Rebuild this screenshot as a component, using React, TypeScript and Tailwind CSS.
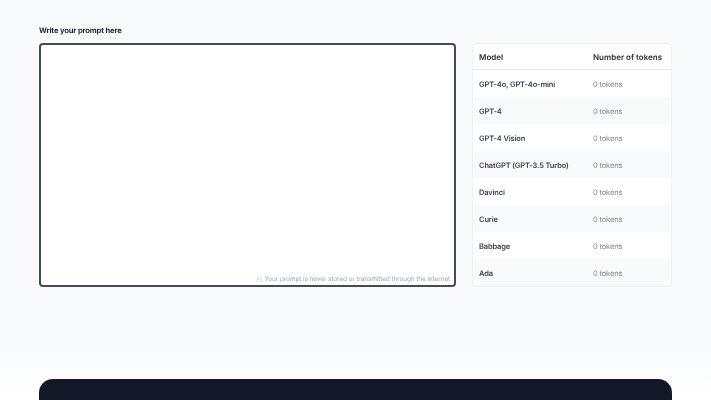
import { Lock } from 'lucide-react'

const models = [
  'GPT-4o, GPT-4o-mini',
  'GPT-4',
  'GPT-4 Vision',
  'ChatGPT (GPT-3.5 Turbo)',
  'Davinci',
  'Curie',
  'Babbage',
  'Ada',
]

export default function App() {
  return (
    <div className="h-[400px] overflow-hidden bg-[#f9fafb] font-['Inter',sans-serif] [text-rendering:geometricPrecision]">
      <div className="flex h-[345px] flex-col px-[39px] pt-[25px]">
        <div className="text-[7.6px] leading-[11px] font-bold tracking-[-0.02em] text-[#1f2937] will-change-transform">
          Write your prompt here
        </div>
        <div className="mt-[7px] flex gap-[16px]">
          <div className="relative h-[244px] w-[417px] rounded-[4px] border-2 border-[#434b58] bg-white">
            <textarea className="h-full w-full resize-none bg-transparent outline-none" />
            <div className="absolute right-[4px] bottom-[1px] flex items-center gap-[2px] text-[6.55px] leading-[10px] tracking-[-0.02em] text-[#a3a9b3] will-change-transform">
              <Lock size={6.5} strokeWidth={1} />
              <span>Your prompt is never stored or transmitted through the internet</span>
            </div>
          </div>
          <div className="h-[244px] w-[200px] overflow-hidden rounded-[4px] border border-[#f0f1f3] bg-white">
            <div className="flex h-[26px] items-center border-b border-[#e5e7eb] px-[6px] text-[8px] font-semibold text-[#1f2937] will-change-transform">
              <div className="w-[114px]">Model</div>
              <div>Number of tokens</div>
            </div>
            {models.map((name, i) => (
              <div
                key={name}
                className={`flex h-[27px] items-center px-[6px] pt-[1.5px] text-[7.5px] tracking-[-0.02em] will-change-transform ${i % 2 === 1 ? 'bg-[#f9fafb]' : 'bg-white'}`}
              >
                <div className="w-[114px] font-semibold text-[#3b4554]">{name}</div>
                <div className="text-[#7d8490]">0 tokens</div>
              </div>
            ))}
          </div>
        </div>
      </div>
      <div className="h-[55px] bg-gradient-to-b from-[#f9fafb] to-white px-[39px] pt-[34px]">
        <div className="h-[60px] rounded-[14px] bg-[#111827]" />
      </div>
    </div>
  )
}
